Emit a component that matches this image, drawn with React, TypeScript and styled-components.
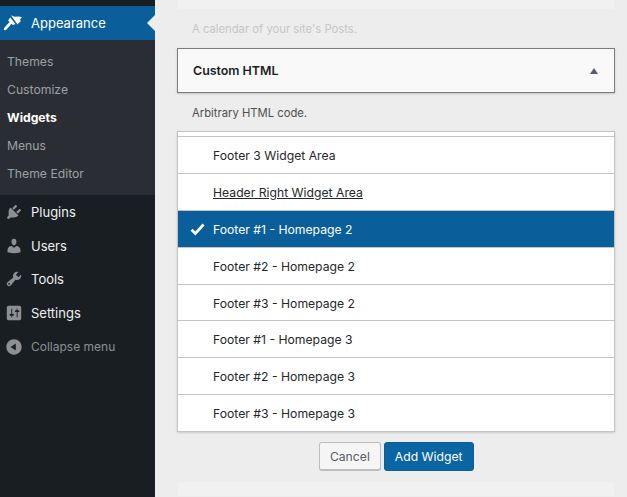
import React from "react";
import styled, { createGlobalStyle } from "styled-components";

const Global = createGlobalStyle`
html, body { margin: 0; padding: 0; height: 100%; overflow: hidden; }
body { font-family: "Inter", "Liberation Sans", sans-serif; background: #ededed; }
#root { height: 100%; }
`;

const Page = styled.div`
display: flex;
width: 627px;
height: 497px;
overflow: hidden;
`;

const Sidebar = styled.nav`
width: 155px;
flex: none;
background: #191e23;
padding-top: 6px;
box-sizing: border-box;
`;

const ActiveItem = styled.div`
position: relative;
display: flex;
align-items: center;
height: 34px;
background: #0a5f9a;
color: #fff;
font-size: 13px;
&::after {
    content: "";
    position: absolute;
    right: 0;
    top: 9px;
    border: 8px solid transparent;
    border-right-color: #ededed;
    border-left-width: 0;
}
`;

const IconSlot = styled.span<{ $muted?: boolean }>`
display: flex;
align-items: center;
justify-content: center;
width: 18px;
height: 18px;
margin: 0 8px 0 5px;
color: ${props => (props.$muted ? "#8c8f94" : "inherit")};
svg { width: 18px; height: 18px; fill: currentColor; display: block; overflow: visible; }
`;

const SubMenu = styled.div`
display: flex;
flex-direction: column;
height: 155px;
padding: 7px 0;
box-sizing: border-box;
background: #2a2e34;
`;

const SubItem = styled.div<{ $current?: boolean }>`
display: flex;
align-items: center;
height: 28px;
padding-left: 7px;
font-size: 12.2px;
font-weight: ${props => (props.$current ? 700 : 400)};
color: ${props => (props.$current ? "#fff" : "#9da0a4")};
`;

const MenuList = styled.div`
display: flex;
flex-direction: column;
padding-top: .4px;
`;

const MenuItem = styled.div<{ $dim?: boolean }>`
display: flex;
align-items: center;
height: 33.6px;
font-size: ${props => (props.$dim ? "12px" : "13px")};
color: ${props => (props.$dim ? "#8d9094" : "#f0f0f1")};
`;

const Main = styled.main`
flex: 1;
min-width: 0;
padding: 0 12.5px 0 22px;
display: flex;
flex-direction: column;
`;

const GhostCard = styled.div<{ $h: number; $gap?: number }>`
height: ${props => props.$h}px;
margin: ${props => props.$gap ?? 0}px .5px 0;
flex: none;
background: #f1f1f1;
`;

const Description = styled.p<{ $faded?: boolean }>`
margin: 10px 0 0;
padding: 1px 0 0 15px;
height: 18px;
line-height: 19px;
font-size: 11.25px;
color: ${props => (props.$faded ? "#c6c6c6" : "#4d4d4d")};
`;

const WidgetHead = styled.div`
display: flex;
align-items: center;
justify-content: space-between;
box-sizing: border-box;
height: 45px;
margin-top: 10px;
padding: 0 16px 0 15px;
border: 1px solid #7c7c7c;
background: #f9f9f9;
box-shadow: 0 1px 2px rgba(0, 0, 0, .18);
font-size: 12.4px;
font-weight: 600;
color: #191e23;
`;

const Caret = styled.span`
width: 0;
height: 0;
border: 4.5px solid transparent;
border-top-width: 0;
border-bottom: 6px solid #555d66;
`;

const AreaList = styled.ul`
list-style: none;
margin: 9px 0 0;
padding: 4px 0 0;
background: #fff;
border: 1px solid #c4c4c4;
box-shadow: 0 1px 2px rgba(0, 0, 0, .15);
`;

const AreaRow = styled.li<{ $selected?: boolean; $underline?: boolean }>`
display: flex;
align-items: center;
box-sizing: border-box;
height: 36.9px;
padding-top: 1px;
border-top: 1px solid #c4c4c4;
background: ${props => (props.$selected ? "#0a5f9a" : "#fff")};
color: ${props => (props.$selected ? "#fff" : "#23282d")};
font-size: 12.2px;
text-decoration: ${props => (props.$underline ? "underline" : "none")};
`;

const CheckSlot = styled.span`
flex: none;
display: flex;
align-items: center;
justify-content: center;
width: 35px;
padding-left: 4px;
box-sizing: border-box;
svg { width: 15px; height: 13px; fill: #fff; display: block; }
`;

const Actions = styled.div`
display: flex;
justify-content: center;
gap: 3px;
margin-top: 10px;
padding-left: 1px;
`;

const Button = styled.button<{ $primary?: boolean }>`
height: 29px;
padding: 0 10px;
box-sizing: border-box;
border-radius: 3px;
font-family: inherit;
font-size: 12.2px;
border: 1px solid ${props => (props.$primary ? "#0a5f9a" : "#bdbdbd")};
border-bottom-width: ${props => (props.$primary ? "1px" : "2px")};
background: ${props => (props.$primary ? "#0a66a3" : "#f5f5f5")};
color: ${props => (props.$primary ? "#fff" : "#555d66")};
`;

const BrushIcon = () => (
    <svg viewBox="5 14 18 18">
        <path d="M11 15.3l3.5 1.5 3.6-.4 3.9.6-2 2.5.8 1.5-3.3 3.5z" />
        <path d="M10.3 17.5l5.2 6.5-2.5 1-1.5-1.2-4.7 5.4c-.9.9-2.2 1.3-2.8.8-.5-.6-.1-1.9.8-2.8l4.8-5.2-1.5-1.5z" />
    </svg>
);
const PluginIcon = () => (
    <svg viewBox="0 0 20 20"><path d="M13.11 4.36L9.87 7.6 8 5.73l3.24-3.24c.35-.34 1.05-.2 1.56.32.52.51.66 1.21.31 1.55zm-8 1.77l.91-1.12 9.01 9.01-1.19.84c-.71.71-2.63 1.16-3.82 1.16H6.14L4.9 17.26c-.59.59-1.54.59-2.12 0-.59-.58-.59-1.53 0-2.12l1.24-1.24v-3.88c0-1.13.4-3.19 1.09-3.89zm7.26 3.97l3.24-3.24c.34-.35 1.04-.21 1.55.31.52.51.66 1.21.31 1.55l-3.24 3.25z" /></svg>
);
const UsersIcon = () => (
    <svg viewBox="0 0 20 20"><path d="M10 9.25c-2.27 0-2.73-3.44-2.73-3.44C7 4.02 7.82 2 9.97 2c2.16 0 2.98 2.02 2.71 3.81 0 0-.41 3.44-2.68 3.44zm0 2.57L12.72 10c2.39 0 4.52 2.33 4.52 4.53v2.49s-3.65 1.13-7.24 1.13c-3.65 0-7.24-1.13-7.24-1.13v-2.49c0-2.25 1.94-4.48 4.47-4.48z" /></svg>
);
const ToolsIcon = () => (
    <svg viewBox="0 0 20 20"><path d="M16.68 9.77c-1.34 1.34-3.3 1.67-4.95.99l-5.41 6.52c-.99.99-2.59.99-3.58 0s-.99-2.59 0-3.57l6.52-5.42c-.68-1.65-.35-3.61.99-4.95 1.28-1.28 3.12-1.62 4.72-1.06l-2.89 2.89 2.82 2.82 2.86-2.87c.53 1.58.18 3.39-1.08 4.65zM3.81 16.21c.4.39 1.04.39 1.43 0 .4-.4.4-1.04 0-1.43-.39-.4-1.03-.4-1.43 0-.39.39-.39 1.03 0 1.43z" /></svg>
);
const SettingsIcon = () => (
    <svg viewBox="0 0 20 20"><path d="M18 16V4c0-1.1-.9-2-2-2H4c-1.1 0-2 .9-2 2v12c0 1.1.9 2 2 2h12c1.1 0 2-.9 2-2zM8 11h1c.55 0 1 .45 1 1s-.45 1-1 1H8v1.5c0 .28-.22.5-.5.5s-.5-.22-.5-.5V13H6c-.55 0-1-.45-1-1s.45-1 1-1h1V5.5c0-.28.22-.5.5-.5s.5.22.5.5V11zm5-2h-1c-.55 0-1-.45-1-1s.45-1 1-1h1V5.5c0-.28.22-.5.5-.5s.5.22.5.5V7h1c.55 0 1 .45 1 1s-.45 1-1 1h-1v5.5c0 .28-.22.5-.5.5s-.5-.22-.5-.5V9z" /></svg>
);
const CollapseIcon = () => (
    <svg viewBox="0 0 20 20"><path fillRule="evenodd" d="M10 1.5c4.7 0 8.5 3.8 8.5 8.5s-3.8 8.5-8.5 8.5S1.5 14.7 1.5 10 5.3 1.5 10 1.5zM12 6.1L6.2 10l5.8 3.9z" /></svg>
);

const subItems = ["Themes", "Customize", "Widgets", "Menus", "Theme Editor"];
const menuItems = [
    { label: "Plugins", icon: <PluginIcon /> },
    { label: "Users", icon: <UsersIcon /> },
    { label: "Tools", icon: <ToolsIcon /> },
    { label: "Settings", icon: <SettingsIcon /> },
];
const areas = [
    "Footer 3 Widget Area",
    "Header Right Widget Area",
    "Footer #1 - Homepage 2",
    "Footer #2 - Homepage 2",
    "Footer #3 - Homepage 2",
    "Footer #1 - Homepage 3",
    "Footer #2 - Homepage 3",
    "Footer #3 - Homepage 3",
];

const App = () => {
    return (
        <Page>
            <Global />
            <Sidebar>
                <ActiveItem>
                    <IconSlot><BrushIcon /></IconSlot>
                    Appearance
                </ActiveItem>
                <SubMenu>
                    {subItems.map(item => (
                        <SubItem key={item} $current={item === "Widgets"}>{item}</SubItem>
                    ))}
                </SubMenu>
                <MenuList>
                    {menuItems.map(item => (
                        <MenuItem key={item.label}>
                            <IconSlot $muted>{item.icon}</IconSlot>
                            {item.label}
                        </MenuItem>
                    ))}
                    <MenuItem $dim>
                        <IconSlot $muted><CollapseIcon /></IconSlot>
                        Collapse menu
                    </MenuItem>
                </MenuList>
            </Sidebar>
            <Main>
                <GhostCard $h={9} />
                <Description $faded>A calendar of your site's Posts.</Description>
                <WidgetHead>
                    Custom HTML
                    <Caret />
                </WidgetHead>
                <Description>Arbitrary HTML code.</Description>
                <AreaList>
                    {areas.map((area, i) => (
                        <AreaRow key={area} $selected={i === 2} $underline={i === 1}>
                            <CheckSlot>
                                {i === 2 && (
                                    <svg viewBox="0 0 15 13"><path d="M5.4 12.6L.6 7.8l2-2 2.7 2.7L12.6.6l2 1.9z" /></svg>
                                )}
                            </CheckSlot>
                            {area}
                        </AreaRow>
                    ))}
                </AreaList>
                <Actions>
                    <Button>Cancel</Button>
                    <Button $primary>Add Widget</Button>
                </Actions>
                <GhostCard $h={14} $gap={11} />
            </Main>
        </Page>
    );
};

export default App;
